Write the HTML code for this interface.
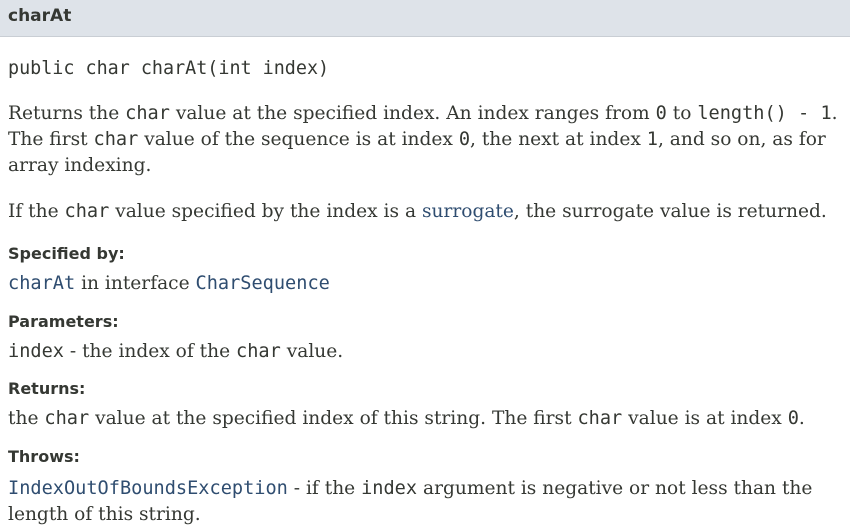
<!DOCTYPE html>
<html><head><style>
body{margin:0;width:850px;height:529px;overflow:hidden;background:#fff;color:#353833;font-family:"DejaVu Serif","Liberation Serif",serif;font-size:18.6px}
.h{height:36px;background:#dee3e9;border-bottom:1px solid #c9ced4;font:bold 17px "DejaVu Sans",sans-serif;padding-left:8px;line-height:32px;color:#353833}
code,.m{font-family:"DejaVu Sans Mono",monospace;font-size:18.6px}
.a{position:absolute;left:8px;white-space:nowrap}
.b{font:bold 16px "DejaVu Sans",sans-serif}
a{color:#2f4d70;text-decoration:none}
p{margin:0;position:absolute;left:8px;width:835px;line-height:26px}
</style></head><body>
<div class="h">charAt</div>
<div class="a m" style="top:58px;font-size:18.4px">public char charAt(int index)</div>
<p style="top:101px">Returns the <code>char</code> value at the specified index. An index ranges from <code>0</code> to <code>length() - 1</code>. The first <code>char</code> value of the sequence is at index <code>0</code>, the next at index <code>1</code>, and so on, as for array indexing.</p>
<p style="top:199px">If the <code>char</code> value specified by the index is a <a>surrogate</a>, the surrogate value is returned.</p>
<div class="a b" style="top:244px">Specified by:</div>
<p style="top:271px"><a><code>charAt</code></a> in interface <a><code>CharSequence</code></a></p>
<div class="a b" style="top:312px">Parameters:</div>
<p style="top:339px"><code>index</code> - the index of the <code>char</code> value.</p>
<div class="a b" style="top:379px">Returns:</div>
<p style="top:406px">the <code>char</code> value at the specified index of this string. The first <code>char</code> value is at index <code>0</code>.</p>
<div class="a b" style="top:447px">Throws:</div>
<p style="top:476px"><a><code>IndexOutOfBoundsException</code></a> - if the <code>index</code> argument is negative or not less than the length of this string.</p>
</body></html>
